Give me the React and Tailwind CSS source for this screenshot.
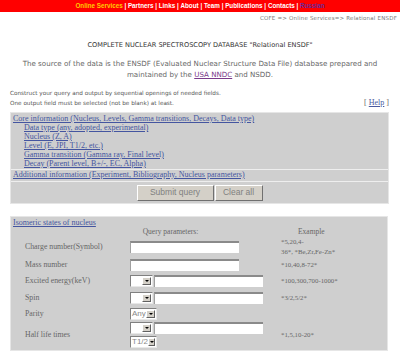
import React from "react";

function Sel({ label, w = "w-[23px]" }) {
  return (
    <div className={`${w} h-[12px] flex items-stretch bg-white border border-t-[#808080] border-l-[#808080] border-b-[#e8e8e8] border-r-[#e8e8e8]`}>
      <div className="flex-1 flex items-center pl-[1px] text-[8px] leading-none text-[#888] font-['Liberation_Sans',sans-serif]">{label}</div>
      <div className="w-[9px] my-[1px] mr-[1px] bg-[#d4d0c8] border border-t-white border-l-white border-b-[#606060] border-r-[#606060] flex items-center justify-center">
        <div className="w-0 h-0 border-l-[2px] border-r-[2px] border-t-[2px] border-l-transparent border-r-transparent border-t-black" />
      </div>
    </div>
  );
}

function Inp({ w }) {
  return <div className={`${w} h-[12px] bg-white border-t-2 border-t-[#8a8a8a] border-l border-l-[#a0a0a0]`} />;
}

function Row({ h, label, children, ex }) {
  return (
    <div className={`flex items-center ${h}`}>
      <div className="w-[119px] pl-[14px] text-[7.8px] text-[#666]">{label}</div>
      <div className="w-[151px] flex flex-col gap-[2px]">{children}</div>
      <div className="text-[6.8px] leading-[10px] text-[#666]">{ex}</div>
    </div>
  );
}

export default function App() {
  const sep = <span className="text-white whitespace-pre"> | </span>;
  return (
    <div className="w-[400px] h-[355px] bg-white overflow-hidden relative">
      <div className="h-[12px] bg-[#ff0000] flex items-center justify-center font-['Liberation_Sans',sans-serif] font-bold text-[6.3px] text-white leading-none">
        <span className="text-[#ffcc00]">Online Services</span>
        {sep}<span>Partners</span>{sep}<span>Links</span>{sep}<span>About</span>{sep}<span>Team</span>{sep}<span>Publications</span>{sep}<span>Contacts</span>{sep}
        <span className="text-[#6a2a9a]">Russian</span>
      </div>
      <div className="text-right pr-[3px] mt-[3px] font-['DejaVu_Sans',sans-serif] text-[5.5px] leading-[7px] text-[#777] tracking-[0.2px]">
        COFE =&gt; Online Services=&gt; Relational ENSDF
      </div>
      <div className="mt-[19px] text-center font-['DejaVu_Sans',sans-serif] text-[6.6px] leading-[9px] text-[#333]">
        COMPLETE NUCLEAR SPECTROSCOPY DATABASE "Relational ENSDF"
      </div>
      <div className="mt-[8px] text-center font-['DejaVu_Sans',sans-serif] text-[7.1px] leading-[11px] text-[#666]">
        The source of the data is the ENSDF (Evaluated Nuclear Structure Data File) database prepared and<br />
        maintained by the <span className="text-[#7a3a8a] underline">USA NNDC</span> and NSDD.
      </div>
      <div className="mt-[8px] mx-[10px] flex items-end font-['DejaVu_Sans',sans-serif] text-[5.7px] leading-[10px] text-[#555]">
        <div className="flex-1">
          Construct your query and output by sequential openings of needed fields.<br />
          One output field must be selected (not be blank) at least.
        </div>
        <div className="font-['Liberation_Serif',serif] text-[8px] text-[#666] mr-[1px]">
          [ <span className="underline text-[#4a5aa0]">Help</span> ]
        </div>
      </div>

      <div className="ml-[10px] w-[379px] mt-[4px] bg-[#cfcfcf] border border-[#e6e6e6] font-['Liberation_Serif',serif] text-[8px] text-[#4455a0]">
        <div className="h-[57px] pl-[2px] pt-[1px] leading-[9px] border-b border-[#eeeeee]">
          <div className="underline">Core information (Nucleus, Levels, Gamma transitions, Decays, Data type)</div>
          <div className="pl-[11px]">
            <div className="underline">Data type (any, adopted, experimental)</div>
            <div className="underline">Nucleus (Z, A)</div>
            <div className="underline">Level (E, JPI, T1/2, etc.)</div>
            <div className="underline">Gamma transition (Gamma ray, Final level)</div>
            <div className="underline">Decay (Parent level, B+/-, EC, Alpha)</div>
          </div>
        </div>
        <div className="h-[12px] pl-[2px] leading-[10px] border-b border-[#eeeeee]">
          <span className="underline">Additional information (Experiment, Bibliography, Nucleus parameters)</span>
        </div>
        <div className="h-[21px] flex items-center justify-center gap-[1px] font-['Liberation_Sans',sans-serif] text-[8.5px] text-[#808080]">
          <div className="w-[77px] h-[16px] flex items-center justify-center bg-[#d4d0c8] border border-t-white border-l-white border-b-[#707070] border-r-[#707070]">Submit query</div>
          <div className="w-[48px] h-[16px] flex items-center justify-center bg-[#d4d0c8] border border-t-white border-l-white border-b-[#707070] border-r-[#707070]">Clear all</div>
        </div>
      </div>

      <div className="ml-[10px] w-[378px] mt-[12px] h-[135px] bg-[#cfcfcf] border border-[#e6e6e6] font-['Liberation_Serif',serif]">
        <div className="pl-[2px] pt-[1px] text-[8px] leading-[9px] text-[#4455a0] underline">Isomeric states of nucleus</div>
        <div className="flex text-[7.5px] leading-[10px] text-[#666]">
          <div className="w-[124px]" />
          <div className="w-[71px] text-center">Query parameters:</div>
          <div className="w-[92px]" />
          <div>Example</div>
        </div>
        <Row h="h-[20px]" label="Charge number(Symbol)" ex={<>*5,20,4-<br />36*, *Be,Zr,Fe-Zn*</>}>
          <Inp w="w-[109px]" />
        </Row>
        <Row h="h-[15px]" label="Mass number" ex="*10,40,8-72*">
          <Inp w="w-[109px]" />
        </Row>
        <Row h="h-[17px]" label="Excited energy(keV)" ex="*100,300,700-1000*">
          <div className="flex gap-[1px]"><Sel /><Inp w="w-[109px]" /></div>
        </Row>
        <Row h="h-[17px]" label="Spin" ex="*3/2,5/2*">
          <div className="flex gap-[1px]"><Sel /><Inp w="w-[109px]" /></div>
        </Row>
        <Row h="h-[16px]" label="Parity" ex="">
          <Sel label="Any" w="w-[27px]" />
        </Row>
        <Row h="h-[25px]" label="Half life times" ex="*1,5,10-20*">
          <div className="flex gap-[1px]"><Sel /><Inp w="w-[109px]" /></div>
          <Sel label="T1/2" w="w-[27px]" />
        </Row>
      </div>
    </div>
  );
}
